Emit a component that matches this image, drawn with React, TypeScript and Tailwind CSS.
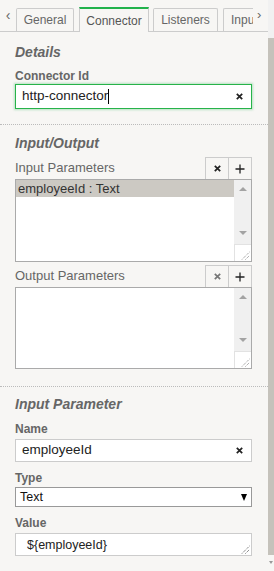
import type { ReactNode } from 'react';

function Cross({ color = '#222', size = 7 }: { color?: string; size?: number }) {
  return (
    <svg width={size} height={size} viewBox="0 0 7 7">
      <path d="M0.8 0.8 L6.2 6.2 M6.2 0.8 L0.8 6.2" stroke={color} strokeWidth="1.7" />
    </svg>
  );
}

function Plus() {
  return (
    <svg width="10" height="10" viewBox="0 0 10 10">
      <path d="M5 0.5 V9.5 M0.5 5 H9.5" stroke="#222" strokeWidth="1.3" />
    </svg>
  );
}

function Grip({ color = '#777' }: { color?: string }) {
  return (
    <svg width="9" height="9" viewBox="0 0 9 9">
      <path d="M1 8.5 L8.5 1 M4.5 8.5 L8.5 4.5" stroke={color} strokeWidth="1" strokeDasharray="1 1" />
    </svg>
  );
}

function Heading({ children }: { children: ReactNode }) {
  return <div className="text-[14px] leading-[18px] font-bold italic text-[#666]">{children}</div>;
}

function Label({ children, className = '' }: { children: ReactNode; className?: string }) {
  return <div className={`text-[12px] leading-[16px] font-bold text-[#666] ${className}`}>{children}</div>;
}

function ParamList({
  title,
  height,
  items,
  canRemove,
  className = '',
}: {
  title: string;
  height: string;
  items: string[];
  canRemove: boolean;
  className?: string;
}) {
  return (
    <div className={className}>
      <div className="flex items-center">
        <div className="flex-1 text-[13px] leading-[16px] text-[#666]">{title}</div>
        <div className="w-[24px] h-[22px] border-l border-t border-r border-[#ccc] flex items-center justify-center">
          <Cross color={canRemove ? '#222' : '#777'} />
        </div>
        <div className="w-[23px] h-[22px] border-t border-r border-[#ccc] flex items-center justify-center">
          <Plus />
        </div>
      </div>
      <div className={`${height} border border-[#aaa] flex bg-white`}>
        <div className="flex-1">
          {items.map((item) => (
            <div key={item} className="h-[17px] bg-[#ccc9c3] pl-[2px] text-[13px] leading-[17px] text-[#333]">
              {item}
            </div>
          ))}
        </div>
        <div className="w-[17px] flex flex-col">
          <div className="flex-1 bg-[#f0f0f0] flex flex-col items-center justify-between pt-[7px] pb-[9px]">
            <div className="w-0 h-0 border-l-[4px] border-r-[4px] border-b-[4px] border-l-transparent border-r-transparent border-b-[#a3a3a3]" />
            <div className="w-0 h-0 border-l-[4px] border-r-[4px] border-t-[4px] border-l-transparent border-r-transparent border-t-[#a3a3a3]" />
          </div>
          <div className="h-[17px] bg-white border-l border-t border-[#e2e2e2] flex items-end justify-end pr-[1px] pb-[1px]">
            <Grip color="#888" />
          </div>
        </div>
      </div>
    </div>
  );
}

export default function App() {
  return (
    <div className="w-[274px] h-[571px] overflow-hidden flex bg-[#f7f6f4] font-['Liberation_Sans',Arial,sans-serif]">
      <div className="w-[268px] flex flex-col">
        {/* tabs */}
        <div className="h-[32px] flex items-end border-b border-[#ccc]">
          <div className="w-[16px] h-full flex items-center justify-center text-[14px] text-[#666] pb-[1px]">‹</div>
          <div className="w-[237px] flex items-end overflow-x-clip">
            <div className="w-[58px] h-[23px] shrink-0 border border-b-0 border-[#ccc] rounded-t-[2px] flex items-center justify-center text-[12px] text-[#666]">
              General
            </div>
            <div className="ml-[5px] w-[70px] h-[25px] -mb-px shrink-0 bg-[#f7f6f4] border-x border-[#ccc] border-t-2 border-t-[#22b24c] flex items-center justify-center text-[12px] text-[#555] pt-[1px]">
              Connector
            </div>
            <div className="ml-[4px] w-[65px] h-[23px] shrink-0 border border-b-0 border-[#ccc] rounded-t-[2px] flex items-center justify-center text-[12px] text-[#666]">
              Listeners
            </div>
            <div className="ml-[5px] w-[31px] h-[23px] shrink-0 border-l border-t border-[#ccc] rounded-tl-[2px] overflow-hidden whitespace-nowrap flex items-center pl-[7px] text-[12px] text-[#666]">
              Input/Output
            </div>
          </div>
          <div className="flex-1 h-full flex items-center pl-[4px] text-[13px] text-[#666] pb-[1px]">›</div>
        </div>

        {/* details */}
        <div className="pt-[11px] pl-[15px] pr-[16px] pb-[15px] border-b border-dotted border-[#bbb]">
          <Heading>Details</Heading>
          <Label className="mt-[7px]">Connector Id</Label>
          <div className="h-[25px] bg-white border border-[#27b34a] shadow-[0_0_2px_1px_rgba(40,180,80,0.3)] flex items-center pl-[6px] pr-[8px]">
            <span className="text-[13.5px] text-[#222]">http-connector</span>
            <span className="w-px h-[15px] bg-black" />
            <span className="flex-1" />
            <Cross />
          </div>
        </div>

        {/* input / output */}
        <div className="pt-[9px] pl-[15px] pr-[16px] pb-[17px] border-b border-dotted border-[#bbb]">
          <Heading>Input/Output</Heading>
          <ParamList className="mt-[5px]" title="Input Parameters" height="h-[83px]" items={['employeeId : Text']} canRemove />
          <ParamList className="mt-[3px]" title="Output Parameters" height="h-[82px]" items={[]} canRemove={false} />
        </div>

        {/* input parameter */}
        <div className="pt-[8px] pl-[15px] pr-[16px]">
          <Heading>Input Parameter</Heading>
          <Label className="mt-[8px]">Name</Label>
          <div className="mt-[2px] h-[23px] bg-white border border-[#ccc] flex items-center pl-[6px] pr-[8px]">
            <span className="flex-1 text-[13.5px] text-[#222]">employeeId</span>
            <Cross />
          </div>
          <Label className="mt-[8px]">Type</Label>
          <div className="mt-[1px] h-[20px] bg-white border border-[#999] flex items-center pl-[4px] pr-[4px]">
            <span className="flex-1 text-[12.5px] text-[#111]">Text</span>
            <div className="w-0 h-0 border-l-[3.5px] border-r-[3.5px] border-t-[7px] border-l-transparent border-r-transparent border-t-black" />
          </div>
          <Label className="mt-[8px]">Value</Label>
          <div className="mt-[2px] h-[23px] bg-white border border-[#ccc] flex pl-[11px] pr-[1px]">
            <span className="flex-1 pt-[2px] text-[12.5px] text-[#222]">{'${employeeId}'}</span>
            <div className="self-end pb-[1px]">
              <Grip color="#555" />
            </div>
          </div>
        </div>
      </div>

      {/* page scrollbar */}
      <div className="w-[6px] flex flex-col">
        <div className="h-[38px] bg-[#f1f1f1]" />
        <div className="h-[517px] bg-[#c5c2bb]" />
        <div className="flex-1 flex justify-center pt-[6px]">
          <div className="w-0 h-0 border-l-[2px] border-r-[2px] border-t-[3px] border-l-transparent border-r-transparent border-t-[#999]" />
        </div>
      </div>
    </div>
  );
}
